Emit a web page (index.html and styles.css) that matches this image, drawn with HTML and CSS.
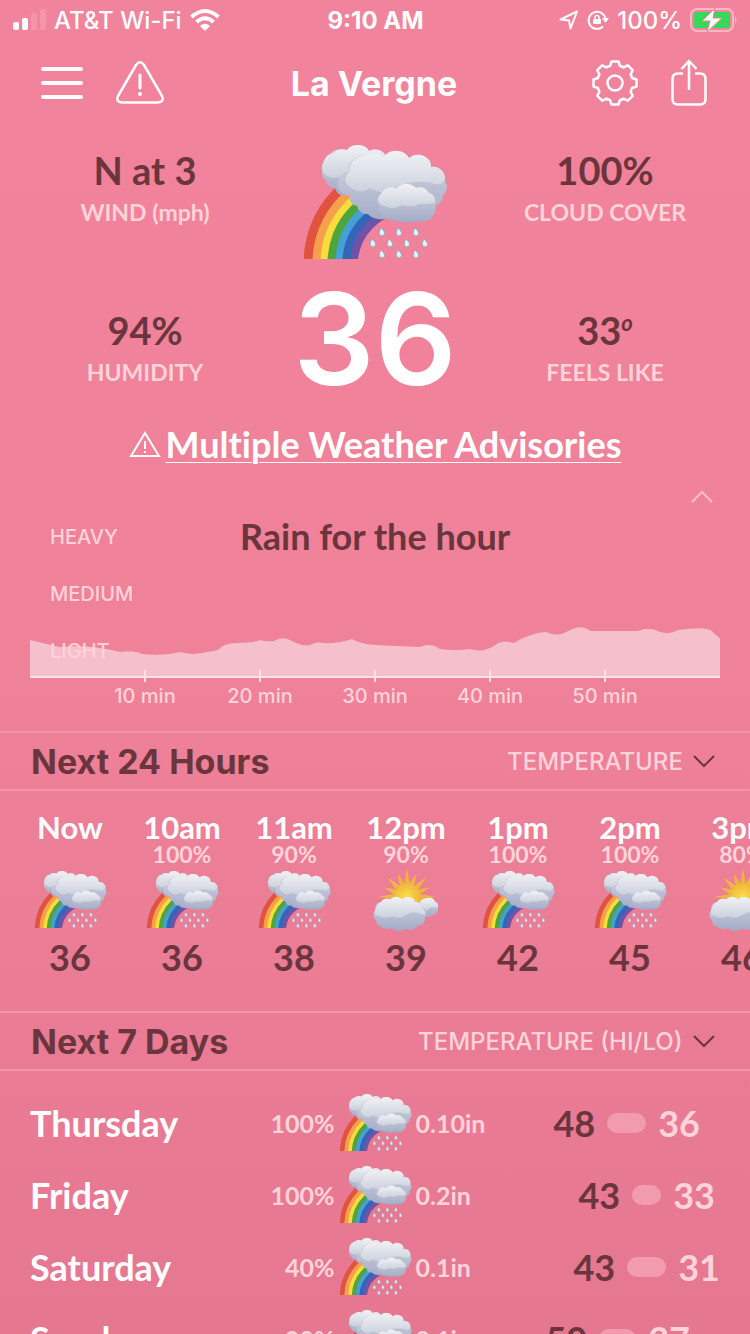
FILE: index.html
```
<!DOCTYPE html>
<html lang="en">
<head>
    <meta charset="UTF-8">
    <meta name="viewport" content="width=device-width, initial-scale=1.0">
    <title>La Vergne Weather</title>
    <link rel="stylesheet" href="styles.css">
</head>
<body>
    <!-- Shared icons -->
    <svg class="sprite" aria-hidden="true">
        <defs>
            <linearGradient id="cloud-light" x1="0" y1="0" x2="0" y2="1">
                <stop offset="0" stop-color="#f1f2f5"/>
                <stop offset="1" stop-color="#ccd1dd"/>
            </linearGradient>
            <linearGradient id="cloud-dark" x1="0" y1="0" x2="0" y2="1">
                <stop offset="0" stop-color="#d5d8e1"/>
                <stop offset="1" stop-color="#a3abc6"/>
            </linearGradient>
            <radialGradient id="sun-fill">
                <stop offset="0" stop-color="#fbdf4c"/>
                <stop offset="1" stop-color="#f0b93c"/>
            </radialGradient>
            <clipPath id="rainbow-clip">
                <path d="M0 40H84V73Q58 86 54 114H0Z"/>
            </clipPath>
        </defs>
        <symbol id="rain" viewBox="0 0 142 116" overflow="visible">
            <g clip-path="url(#rainbow-clip)" fill="none" stroke-width="9">
                <circle cx="104" cy="118" r="54" stroke="#6e53a8"/>
                <circle cx="104" cy="118" r="62" stroke="#3466b8"/>
                <circle cx="104" cy="118" r="70" stroke="#45a0d8"/>
                <circle cx="104" cy="118" r="77" stroke="#4ea53c"/>
                <circle cx="104" cy="118" r="85" stroke="#fbdc3a"/>
                <circle cx="104" cy="118" r="92" stroke="#f5a04c"/>
                <circle cx="104" cy="118" r="100" stroke="#e2533f"/>
            </g>
            <path fill="url(#cloud-dark)" d="M22 36A9 9 0 0 1 19 24A10 10 0 0 1 25 11A12 10 0 0 1 43 6A12 9 0 0 1 65 6A11 9 0 0 1 82 12L80 40L46 48A9 9 0 0 1 31 43A9 9 0 0 1 22 36Z"/>
            <path fill="url(#cloud-light)" d="M19 27A9 9 0 0 1 20 17A10 10 0 0 1 30 8A10 8 0 0 1 43 5A12 9 0 0 1 65 6A11 9 0 0 1 82 12L56 24A12 10 0 0 1 40 29A12 9 0 0 1 19 27Z"/>
            <path fill="url(#cloud-dark)" d="M45 50A11 11 0 0 1 45 27A12 12 0 0 1 59 12A14 10 0 0 1 80 12A14 12 0 0 1 105 13A13 11 0 0 1 127 22A12 12 0 0 1 141 36A10 10 0 0 1 139 50A11 11 0 0 1 131 61L124 72A10 8 0 0 1 108 75A14 9 0 0 1 86 72A14 9 0 0 1 64 69A10 10 0 0 1 53 61A10 10 0 0 1 45 50Z"/>
            <path fill="url(#cloud-light)" d="M42 38A11 11 0 0 1 46 26A12 12 0 0 1 59 12A14 10 0 0 1 80 12A14 12 0 0 1 105 13A13 11 0 0 1 127 22A12 12 0 0 1 141 34Q138 42 128 38Q110 34 92 42Q82 52 66 43Q54 52 42 38Z"/>
            <path fill="url(#cloud-dark)" d="M76 62A8 8 0 0 1 77 49A10 9 0 0 1 92 44A12 10 0 0 1 112 43A10 9 0 0 1 125 48A8 8 0 0 1 131 58Q133 67 128 72A10 7 0 0 1 113 75A12 7 0 0 1 93 74A10 7 0 0 1 78 69Q73 65 76 62Z"/>
            <path fill="url(#cloud-light)" d="M75 58A8 8 0 0 1 77 49A10 9 0 0 1 92 44A12 10 0 0 1 112 43A10 9 0 0 1 125 48A8 8 0 0 1 131 58Q126 59 115 59Q109 63 98 60Q88 67 75 58Z"/>
            <g fill="#e6f1f6" stroke="#8fb0c8">
                <path d="M77 83q5 4 3 7q-2 2-4 0q-2-2 1-7Z"/>
                <path d="M94 83q5 4 3 7q-2 2-4 0q-2-2 1-7Z"/>
                <path d="M111 83q5 4 3 7q-2 2-4 0q-2-2 1-7Z"/>
                <path d="M68 94q5 4 3 7q-2 2-4 0q-2-2 1-7Z"/>
                <path d="M85 94q5 4 3 7q-2 2-4 0q-2-2 1-7Z"/>
                <path d="M102 94q5 4 3 7q-2 2-4 0q-2-2 1-7Z"/>
                <path d="M120 94q5 4 3 7q-2 2-4 0q-2-2 1-7Z"/>
                <path d="M77 105q5 4 3 7q-2 2-4 0q-2-2 1-7Z"/>
                <path d="M94 105q5 4 3 7q-2 2-4 0q-2-2 1-7Z"/>
                <path d="M111 105q5 4 3 7q-2 2-4 0q-2-2 1-7Z"/>
            </g>
        </symbol>
        <symbol id="partly-sunny" viewBox="0 0 71 71" overflow="visible">
            <g fill="#f0b440">
                <g id="ray-set">
                    <path d="M33 19L36 1L39 19Z"/>
                    <path d="M33 19L36 5L39 19Z" transform="rotate(22 36 32)"/>
                    <path d="M33 19L36 2L39 19Z" transform="rotate(45 36 32)"/>
                    <path d="M33 19L36 5L39 19Z" transform="rotate(68 36 32)"/>
                </g>
                <use href="#ray-set" transform="rotate(90 36 32)"/>
                <use href="#ray-set" transform="rotate(270 36 32)"/>
            </g>
            <circle cx="36" cy="32" r="14" fill="url(#sun-fill)"/>
            <path fill="url(#cloud-dark)" d="M48 50L50 40A6 6 0 0 1 57 34A6 6 0 0 1 66 37A5 5 0 0 1 69 44A5 5 0 0 1 65 51A8 6 0 0 1 54 53Z"/>
            <path fill="url(#cloud-light)" d="M50 42A6 6 0 0 1 57 34A6 6 0 0 1 66 37A5 5 0 0 1 69 44Q60 42 58 47Z"/>
            <path fill="url(#cloud-dark)" d="M3 57A6 6 0 0 1 2 47A7 7 0 0 1 8 38A7 6 0 0 1 18 35A8 7 0 0 1 31 35A8 7 0 0 1 45 38A6 6 0 0 1 52 44A6 6 0 0 1 55 54A7 7 0 0 1 47 63A7 5 0 0 1 35 66A9 6 0 0 1 20 66A9 6 0 0 1 8 64A6 6 0 0 1 3 57Z"/>
            <path fill="url(#cloud-light)" d="M2 51A6 6 0 0 1 3 44A7 7 0 0 1 8 38A7 6 0 0 1 18 35A8 7 0 0 1 31 35A8 7 0 0 1 45 38A6 6 0 0 1 52 44A6 6 0 0 1 55 52Q42 46 36 51Q28 57 20 53Q10 57 2 51Z"/>
        </symbol>
        <symbol id="chevron" viewBox="0 0 24 14">
            <path d="M2 2L12 12L22 2" fill="none" stroke="currentColor" stroke-width="2"/>
        </symbol>
    </svg>

    <div class="status-bar">
        <div class="status-left">
            <svg width="33" height="22" viewBox="0 0 33 22" fill="#fff">
                <rect x="0" y="13" width="6" height="8" rx="2"/>
                <rect x="9" y="9" width="6" height="12" rx="2"/>
                <rect x="18" y="4" width="6" height="17" rx="2" opacity=".15"/>
                <rect x="27" y="0" width="6" height="21" rx="2" opacity=".15"/>
            </svg>
            <span>AT&amp;T Wi-Fi</span>
            <svg width="30" height="22" viewBox="0 0 30 22">
                <g fill="none" stroke="#fff" stroke-width="4">
                    <path d="M1.500 8Q15-4 28.500 8"/>
                    <path d="M6.500 13Q15 5.500 23.500 13"/>
                </g>
                <path d="M15 22L10 17Q15 12.500 20 17Z" fill="#fff"/>
            </svg>
        </div>
        <div class="status-time">9:10 AM</div>
        <div class="status-right">
            <svg width="20" height="20" viewBox="0 0 20 20" fill="none" stroke="#fff" stroke-width="2" stroke-linejoin="round">
                <path d="M1.500 9.500L18 1.500L11.500 18.500L10 10.500Z"/>
            </svg>
            <svg width="22" height="20" viewBox="0 0 22 20">
                <path d="M16 16.500A8.500 8.500 0 1 1 18.500 9" fill="none" stroke="#fff" stroke-width="2"/>
                <path d="M15 8H22L18.500 13Z" fill="#fff"/>
                <rect x="6" y="9" width="8" height="5" rx="1" fill="#fff"/>
                <path d="M8 9.500V7.500a2 2 0 0 1 4 0V9.500" fill="none" stroke="#fff" stroke-width="1.500"/>
            </svg>
            <span>100%</span>
            <svg width="48" height="24" viewBox="0 0 48 24">
                <rect x="1" y="1" width="42" height="22" rx="6" fill="none" stroke="#f7b9c6" stroke-width="2"/>
                <rect x="4" y="4" width="36" height="16" rx="3" fill="#33d957"/>
                <path d="M45 8q3 4 0 8Z" fill="#f7b9c6"/>
                <path d="M25 0L12 13H20L17 24L32 10H23Z" fill="#fff" stroke="#f0839b"/>
            </svg>
        </div>
    </div>

    <header class="top-bar">
        <div class="top-actions">
            <button type="button" aria-label="Menu">
                <svg width="42" height="48" viewBox="0 0 42 48" stroke="#fff" stroke-width="4" stroke-linecap="round">
                    <path d="M2 10H40M2 24H40M2 38H40"/>
                </svg>
            </button>
            <button type="button" aria-label="Alerts">
                <svg width="48" height="48" viewBox="0 0 48 48" fill="none" stroke="#fff" stroke-width="2.500" stroke-linecap="round" stroke-linejoin="round">
                    <path d="M20 6Q24 .5 28 6L46 37Q48.500 43 42 43.500H6Q-.500 43 2 37Z"/>
                    <path d="M24 16V29" stroke-width="3"/>
                    <circle cx="24" cy="35" r="2" fill="#fff" stroke="none"/>
                </svg>
            </button>
        </div>
        <h1>La Vergne</h1>
        <div class="top-actions top-actions-right">
            <button type="button" aria-label="Settings">
                <svg width="46" height="48" viewBox="-23 -24 46 48" fill="none" stroke="#fff" stroke-width="2.500" stroke-linejoin="round">
                    <path d="M-5-17L-3.500-21.500H3.500L5-17Q7-16.600 8.500-15.600L12.800-17.700L17.700-12.800L15.600-8.500Q16.600-7 17-5L21.500-3.500V3.500L17 5Q16.600 7 15.600 8.500L17.700 12.800L12.800 17.700L8.500 15.600Q7 16.600 5 17L3.500 21.500H-3.500L-5 17Q-7 16.600-8.500 15.600L-12.800 17.700L-17.700 12.800L-15.600 8.500Q-16.600 7-17 5L-21.500 3.500V-3.500L-17-5Q-16.600-7-15.600-8.500L-17.700-12.800L-12.800-17.700L-8.500-15.600Q-7-16.600-5-17Z"/>
                    <circle r="7.500"/>
                </svg>
            </button>
            <button type="button" aria-label="Share">
                <svg width="36" height="48" viewBox="0 0 36 48" fill="none" stroke="#fff" stroke-width="2.500">
                    <path d="M12 14.500H7Q1.500 14.500 1.500 20V40Q1.500 45.500 7 45.500H29Q34.500 45.500 34.500 40V20Q34.500 14.500 29 14.500H24"/>
                    <path d="M18 31V2M10.500 10L18 2L25.500 10"/>
                </svg>
            </button>
        </div>
    </header>

    <main>
        <section class="current">
            <div class="stats">
                <div class="stat">
                    <p class="stat-value">N at 3</p>
                    <p class="stat-label">WIND (mph)</p>
                </div>
                <div class="stat">
                    <p class="stat-value">94%</p>
                    <p class="stat-label">HUMIDITY</p>
                </div>
            </div>
            <div class="current-temp">
                <svg class="icon-large"><use href="#rain"/></svg>
                <p>36</p>
            </div>
            <div class="stats">
                <div class="stat">
                    <p class="stat-value">100%</p>
                    <p class="stat-label">CLOUD COVER</p>
                </div>
                <div class="stat">
                    <p class="stat-value">33<sup>o</sup></p>
                    <p class="stat-label">FEELS LIKE</p>
                </div>
            </div>
        </section>

        <div class="advisory">
            <svg width="32" height="28" viewBox="0 0 32 28" fill="none" stroke="#fff" stroke-width="2">
                <path d="M16 3L30 26H2Z"/>
                <path d="M16 11V19M16 21V23"/>
            </svg>
            <a href="#">Multiple Weather Advisories</a>
        </div>

        <section class="rain-hour">
            <button type="button" class="collapse" aria-label="Collapse">
                <svg width="24" height="14" viewBox="0 0 24 14">
                    <path d="M2 12L12 2L22 12" fill="none" stroke="#ffc0cb" stroke-width="2"/>
                </svg>
            </button>
            <div class="chart">
                <h2>Rain for the hour</h2>
                <svg class="chart-area" viewBox="0 0 690 52" preserveAspectRatio="none">
                    <path fill="#f6bfcc" d="M0 16Q16 20 30 23Q60 20 90 28Q104 26 112 30Q134 32 150 28Q158 30 164 30Q184 27 188 26Q194 19 206 19Q224 19 230 16Q238 18 244 17Q252 12 260 16Q272 23 280 21Q288 17 292 19Q308 20 322 15Q330 20 345 21L390 23Q400 18 410 25Q424 27 440 25Q452 29 464 22Q472 15 484 19Q500 9 516 8Q528 13 536 8Q552 -1 560 7L608 7Q620 2 630 8Q640 11 648 6Q676 2 682 7Q684 10 690 14V52H0Z"/>
                </svg>
                <ul class="levels">
                    <li>HEAVY</li>
                    <li>MEDIUM</li>
                    <li>LIGHT</li>
                </ul>
            </div>
            <ul class="minutes">
                <li>10 min</li>
                <li>20 min</li>
                <li>30 min</li>
                <li>40 min</li>
                <li>50 min</li>
            </ul>
        </section>

        <section>
            <div class="section-bar">
                <h2>Next 24 Hours</h2>
                <label class="picker">
                    <select aria-label="Hourly data">
                        <option>TEMPERATURE</option>
                    </select>
                    <svg width="24" height="14"><use href="#chevron"/></svg>
                </label>
            </div>
            <ul class="hours">
                <li>
                    <span class="hour">Now</span>
                    <span class="chance"></span>
                    <svg class="icon"><use href="#rain"/></svg>
                    <span class="temp">36</span>
                </li>
                <li>
                    <span class="hour">10am</span>
                    <span class="chance">100%</span>
                    <svg class="icon"><use href="#rain"/></svg>
                    <span class="temp">36</span>
                </li>
                <li>
                    <span class="hour">11am</span>
                    <span class="chance">90%</span>
                    <svg class="icon"><use href="#rain"/></svg>
                    <span class="temp">38</span>
                </li>
                <li>
                    <span class="hour">12pm</span>
                    <span class="chance">90%</span>
                    <svg class="icon"><use href="#partly-sunny"/></svg>
                    <span class="temp">39</span>
                </li>
                <li>
                    <span class="hour">1pm</span>
                    <span class="chance">100%</span>
                    <svg class="icon"><use href="#rain"/></svg>
                    <span class="temp">42</span>
                </li>
                <li>
                    <span class="hour">2pm</span>
                    <span class="chance">100%</span>
                    <svg class="icon"><use href="#rain"/></svg>
                    <span class="temp">45</span>
                </li>
                <li>
                    <span class="hour">3pm</span>
                    <span class="chance">80%</span>
                    <svg class="icon"><use href="#partly-sunny"/></svg>
                    <span class="temp">46</span>
                </li>
            </ul>
        </section>

        <section>
            <div class="section-bar">
                <h2>Next 7 Days</h2>
                <label class="picker">
                    <select aria-label="Daily data">
                        <option>TEMPERATURE (HI/LO)</option>
                    </select>
                    <svg width="24" height="14"><use href="#chevron"/></svg>
                </label>
            </div>
            <ul class="days">
                <li>
                    <div class="day"><span class="day-name">Thursday</span><span class="chance">100%</span></div>
                    <svg class="icon"><use href="#rain"/></svg>
                    <div class="amount">0.10in</div>
                    <div class="range" style="margin-right: 20px"><span class="temp">48</span><span class="bar" style="width: 39px"></span><span class="temp low">36</span></div>
                </li>
                <li>
                    <div class="day"><span class="day-name">Friday</span><span class="chance">100%</span></div>
                    <svg class="icon"><use href="#rain"/></svg>
                    <div class="amount">0.2in</div>
                    <div class="range" style="margin-right: 5px"><span class="temp">43</span><span class="bar" style="width: 29px"></span><span class="temp low">33</span></div>
                </li>
                <li>
                    <div class="day"><span class="day-name">Saturday</span><span class="chance">40%</span></div>
                    <svg class="icon"><use href="#rain"/></svg>
                    <div class="amount">0.1in</div>
                    <div class="range" style="margin-right: 0px"><span class="temp">43</span><span class="bar" style="width: 39px"></span><span class="temp low">31</span></div>
                </li>
                <li>
                    <div class="day"><span class="day-name">Sunday</span><span class="chance">90%</span></div>
                    <svg class="icon"><use href="#rain"/></svg>
                    <div class="amount">0.1in</div>
                    <div class="range" style="margin-right: 30px"><span class="temp">50</span><span class="bar" style="width: 37px"></span><span class="temp low">37</span></div>
                </li>
            </ul>
        </section>
    </main>
</body>
</html>
```
FILE: styles.css
```
* {
    box-sizing: border-box;
}
body {
    margin: 0;
    height: 100vh;
    overflow: hidden;
    font-family: Lato, "Noto Sans", sans-serif;
    font-weight: bold;
    font-variant-ligatures: none;
    color: #fff;
    background: linear-gradient(#f1849c, #ef8199 50%, #e57791);
}
h1, h2, p, ul {
    margin: 0;
    padding: 0;
}
ul {
    list-style: none;
}
svg {
    display: block;
    flex-shrink: 0;
    overflow: visible;
}
button {
    padding: 0;
    border: none;
    background: none;
    color: inherit;
    cursor: pointer;
}
.sprite {
    position: absolute;
    width: 0;
    height: 0;
}

/* Status bar */
.status-bar {
    display: grid;
    grid-template-columns: 1fr auto 1fr;
    align-items: center;
    height: 40px;
    padding: 0 12px 0 13px;
    font: 500 24px Inter, sans-serif;
}
.status-left, .status-right {
    display: flex;
    align-items: center;
    gap: 8px;
}
.status-right {
    justify-content: flex-end;
}
.status-time {
    font-weight: 700;
}

/* Header */
.top-bar {
    display: grid;
    grid-template-columns: 1fr auto 1fr;
    align-items: center;
    height: 86px;
    padding: 0 43px 0 41px;
}
.top-bar h1 {
    font: 700 34px Inter, sans-serif;
}
.top-actions {
    display: flex;
    gap: 33px;
}
.top-actions-right {
    justify-content: flex-end;
}

/* Current conditions */
.current {
    display: grid;
    grid-template-columns: 1fr 1fr 1fr;
    padding: 19px 30px 0;
    text-align: center;
}
.stats {
    display: grid;
    gap: 76px;
    align-content: start;
    padding-top: 3px;
}
.stat-value {
    font-size: 38px;
    line-height: 44px;
    color: #6b353e;
}
.stat-value sup {
    font-size: 22px;
    line-height: 0;
    font-style: italic;
}
.stat-label {
    font-size: 23px;
    line-height: 40px;
    color: #ffd3da;
}
.icon-large {
    width: 142px;
    height: 116px;
    margin: 0 auto;
}
.current-temp p {
    font: 600 128px/156px Inter, sans-serif;
}
.advisory {
    display: flex;
    justify-content: center;
    align-items: center;
    gap: 5px;
    height: 54px;
}
.advisory a {
    color: #fff;
    font-size: 36px;
    line-height: 44px;
    text-decoration: underline;
    text-decoration-thickness: 1px;
    text-underline-offset: 4px;
}

/* Rain for the hour */
.rain-hour {
    padding: 19px 30px 0;
    font: 500 20px/24px Inter, sans-serif;
    color: #ffd3da;
}
.collapse {
    display: block;
    margin: 0 6px 0 auto;
}
.chart {
    display: grid;
    border-bottom: 2px solid #ffe3e8;
}
.chart > * {
    grid-area: 1 / 1;
}
.chart h2 {
    font: bold 36px/44px Lato, sans-serif;
    color: #6b353e;
    text-align: center;
    margin-top: 10px;
}
.chart-area {
    width: 100%;
    height: 52px;
    align-self: end;
}
.levels {
    display: grid;
    gap: 33px;
    padding: 21px 0 13px 20px;
}
.minutes {
    display: grid;
    grid-template-columns: repeat(5, 1fr);
    padding: 0 calc(100% / 12);
    text-align: center;
}
.minutes li::before {
    content: "";
    display: block;
    width: 2px;
    height: 12px;
    margin: -8px auto 2px;
    background: #ffe3e8;
}

/* Section bars */
.section-bar {
    display: flex;
    justify-content: space-between;
    align-items: center;
    height: 60px;
    padding: 0 34px 0 31px;
    border-top: 2px solid #f395a9;
    border-bottom: 2px solid #f395a9;
    color: #6b353e;
}
.rain-hour + section {
    margin-top: 23px;
}
.section-bar h2 {
    font: 700 34px Inter, sans-serif;
}
.picker {
    display: flex;
    align-items: center;
    gap: 9px;
}
.picker select {
    appearance: none;
    padding: 0;
    border: none;
    background: none;
    font: 500 24px Inter, sans-serif;
    color: #ffd3da;
}
.icon {
    width: 71px;
    height: 58px;
}
.chance, .amount {
    font-size: 25px;
    color: #ffd3da;
}
.temp {
    font-size: 36px;
    color: #6b353e;
}

/* Hourly */
.hours {
    display: flex;
    padding: 20px 14px 30px;
    overflow: hidden;
}
.hours li {
    display: flex;
    flex-direction: column;
    align-items: center;
    flex: 0 0 112px;
}
.hour {
    font-size: 31px;
    line-height: 32px;
}
.hours .chance {
    height: 24px;
    font-size: 23px;
    line-height: 22px;
}
.hours .icon {
    height: 66px;
}
.hours .temp {
    line-height: 48px;
}

/* Daily */
.days {
    padding: 16px 30px;
}
.days li {
    display: grid;
    grid-template-columns: 1fr 71px 1fr;
    align-items: center;
    column-gap: 5px;
    height: 72px;
}
.day {
    display: flex;
    justify-content: space-between;
    align-items: center;
}
.day-name {
    font-size: 36px;
}
.amount, .range {
    grid-row: 1;
    grid-column: 3;
}
.range {
    display: flex;
    align-items: center;
    justify-content: flex-end;
    gap: 12px;
}
.range .bar {
    height: 20px;
    border-radius: 10px;
    background: #f29bae;
}
.range .low {
    color: #ffd3da;
}
```
